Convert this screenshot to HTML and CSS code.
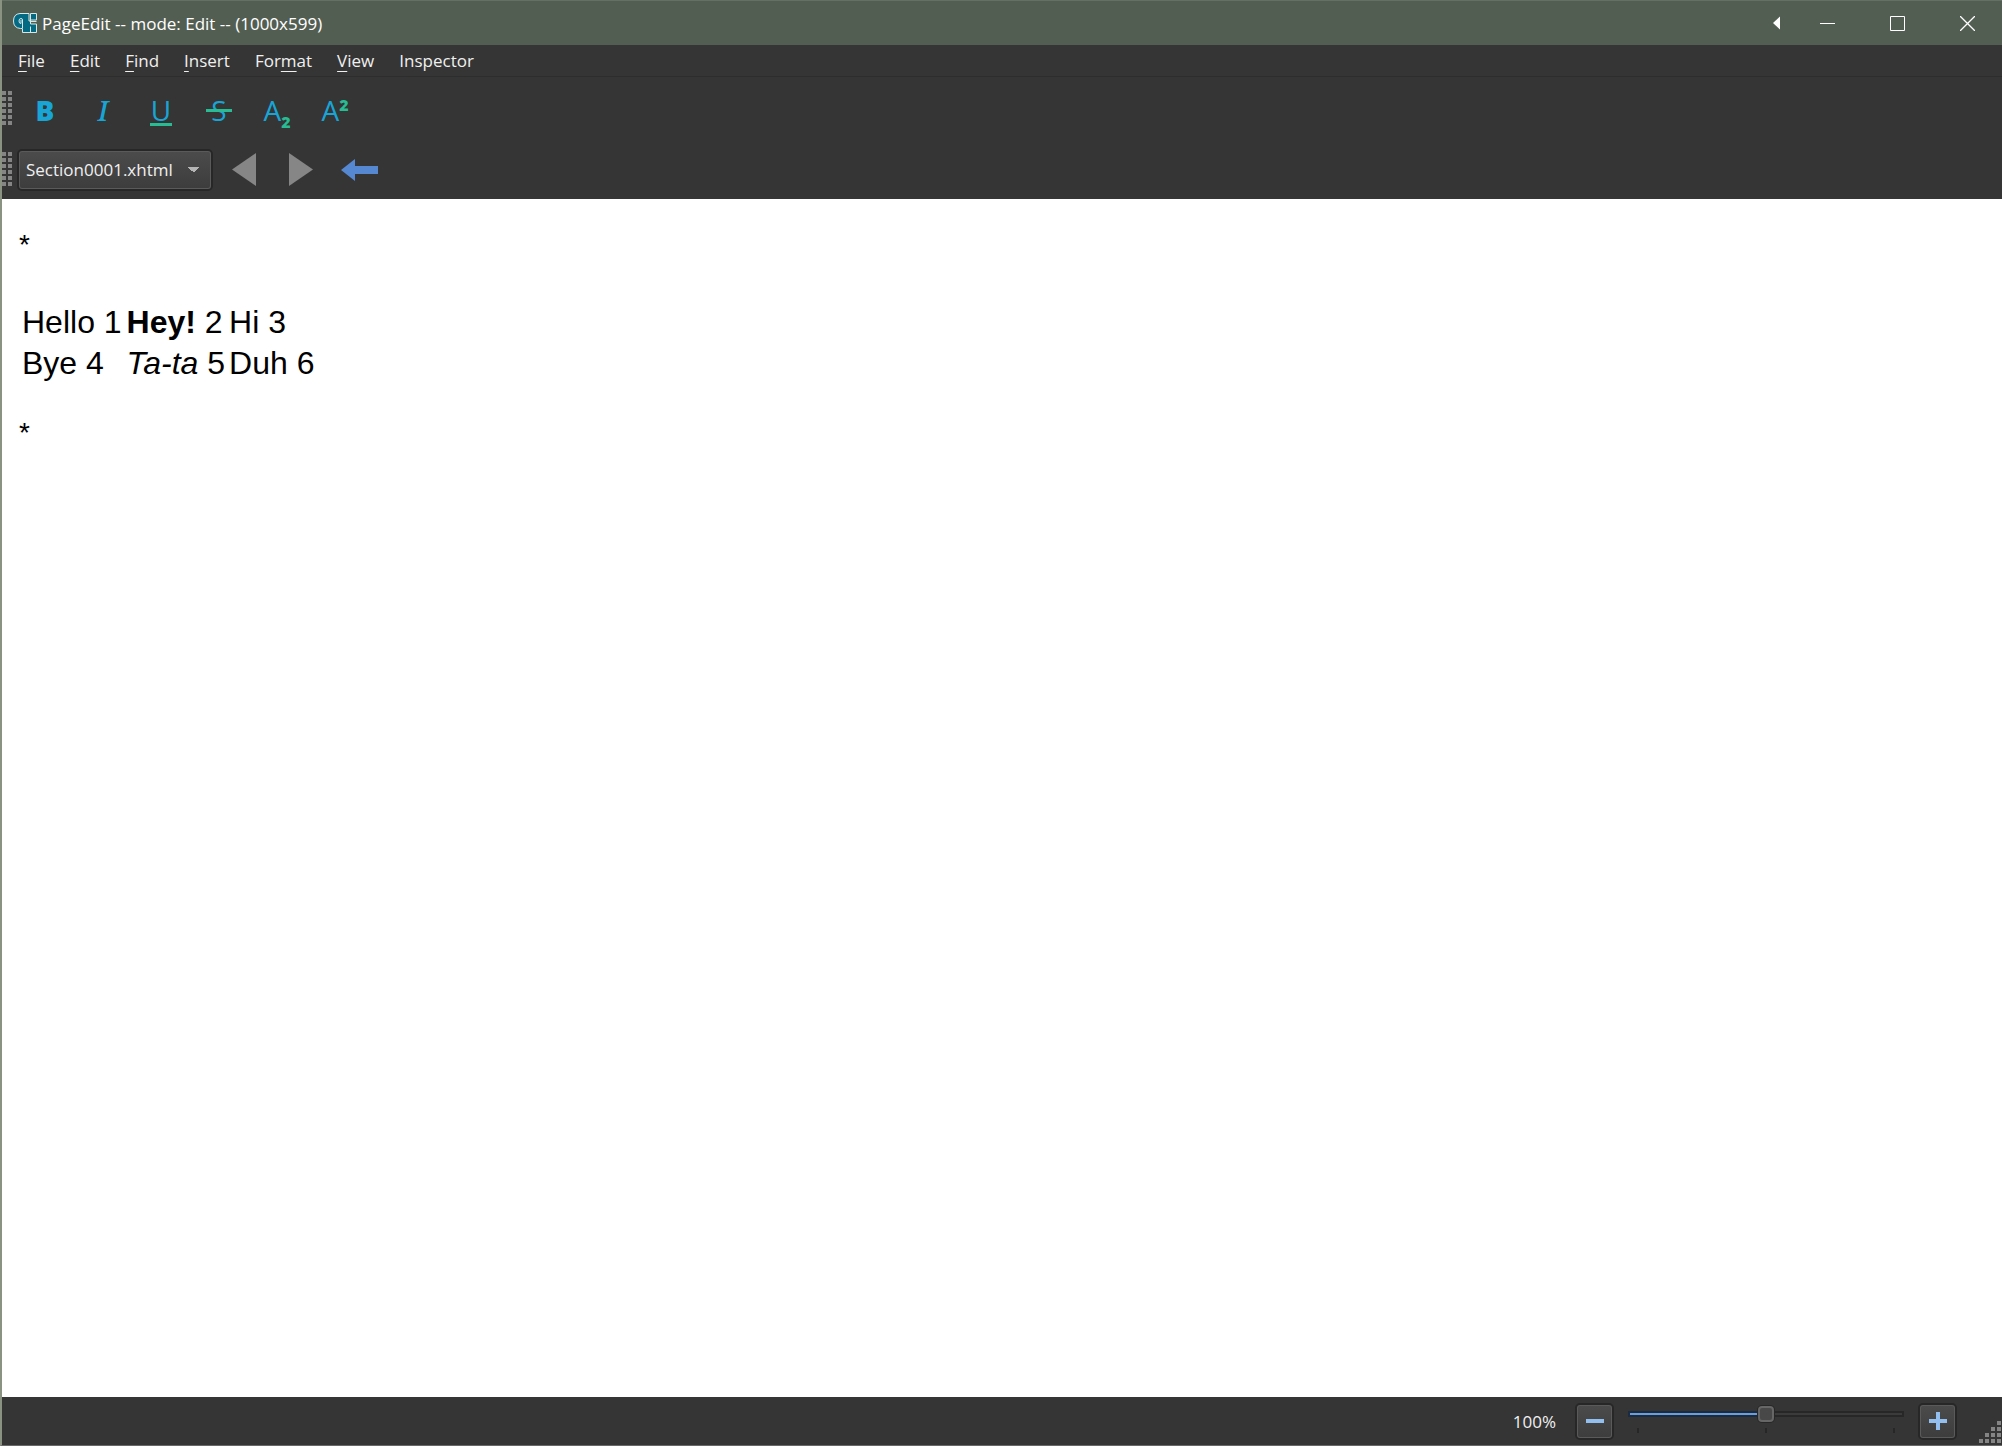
FILE: index.html
```html
<!DOCTYPE html>
<html lang="en">
<head>
<meta charset="utf-8">
<title>PageEdit</title>
<link rel="stylesheet" href="styles.css">
</head>
<body>
<div class="window">
  <header class="titlebar">
    <svg class="logo" width="24" height="20" viewBox="0 0 24 20"><path d="M7 .5h9v7.500h1.500V.5h6v6.500h-6v4h6v8.500h-14v-4h-2q-7-.500-7-7.500t6.500-7.500z" fill="#046a84" stroke="#d5e8e8"/><path d="M9.500 15V7q0-1.500-1.500-1.500q-2 0-2 2.500t2 2.500V7M17.500 19v-5.500M18 8.500h5.500" fill="none" stroke="#d5e8e8"/></svg>
    <h1 class="title">PageEdit -- mode: Edit -- (1000x599)</h1>
    <button class="caption arrow" aria-label="Pin"><svg width="8" height="14"><path d="M7 .5v13L0 7z" fill="#fff"/></svg></button>
    <button class="caption" aria-label="Minimize"><svg width="15" height="15"><path d="M0 7.500h15" stroke="#fff"/></svg></button>
    <button class="caption" aria-label="Maximize"><svg width="15" height="15"><path d="M.5.5h14v14H.5z" fill="none" stroke="#fff"/></svg></button>
    <button class="caption" aria-label="Close"><svg width="15" height="15"><path d="M0 0l15 15M15 0L0 15" stroke="#fff" stroke-width="1.300"/></svg></button>
  </header>
  <nav class="menubar">
    <button><u>F</u>ile</button><button><u>E</u>dit</button><button><u>F</u>ind</button><button><u>I</u>nsert</button><button>For<u>m</u>at</button><button><u>V</u>iew</button><button>Inspector</button>
  </nav>
  <div class="toolbar format">
    <span class="grip"></span>
    <button class="tool bold">B</button>
    <button class="tool italic">I</button>
    <button class="tool under">U</button>
    <button class="tool strike">S</button>
    <button class="tool">A<sub>2</sub></button>
    <button class="tool">A<sup>2</sup></button>
  </div>
  <div class="toolbar navigate">
    <span class="grip"></span>
    <select class="files" aria-label="File"><option>Section0001.xhtml</option></select>
    <button class="step" aria-label="Previous"><svg width="24" height="33"><path d="M24 0v33L0 16.500z" fill="#868686"/></svg></button>
    <button class="step" aria-label="Next"><svg width="24" height="33"><path d="M0 0v33L24 16.500z" fill="#868686"/></svg></button>
    <button class="step" aria-label="Back"><svg width="37" height="22"><path d="M0 11L14 0v7h23v8H14v7z" fill="#5588d0"/></svg></button>
  </div>
  <main class="page">
    <p>*</p>
    <table>
      <tr><td>Hello 1</td><td><b>Hey!</b> 2</td><td>Hi 3</td></tr>
      <tr><td>Bye 4</td><td><i>Ta-ta</i> 5</td><td>Duh 6</td></tr>
    </table>
    <p>*</p>
  </main>
  <footer class="statusbar">
    <label for="zoom">100%</label>
    <button class="zoom" aria-label="Zoom out"><svg width="18" height="18"><path d="M0 7h18v4H0z" fill="#93bff0"/></svg></button>
    <div class="slider">
      <input id="zoom" type="range" min="0" max="100" value="50">
      <div class="ticks"><i></i><i></i><i></i></div>
    </div>
    <button class="zoom" aria-label="Zoom in"><svg width="18" height="18"><path d="M0 7h7V0h4v7h7v4h-7v7H7v-7H0z" fill="#93bff0"/></svg></button>
    <svg class="resize" width="22" height="22" fill="#858585"><path d="M18 0h4v4h-4zM12 6h4v4h-4zM18 6h4v4h-4zM6 12h4v4H6zM12 12h4v4h-4zM18 12h4v4h-4zM0 18h4v4H0zM6 18h4v4H6zM12 18h4v4h-4zM18 18h4v4h-4z"/></svg>
  </footer>
</div>
</body>
</html>
```
FILE: styles.css
```css
* { box-sizing: border-box; }
body {
  margin: 0;
  font-family: "Open Sans", sans-serif;
  font-size: 17px;
  color: #f0f0f0;
  background: #353535;
}
button {
  margin: 0;
  padding: 0;
  border: 0;
  background: none;
  font: inherit;
  color: inherit;
}
svg { display: block; }
.window {
  display: flex;
  flex-direction: column;
  min-height: 100vh;
  border-left: 2px solid #8a9382;
  border-bottom: 1px solid #686868;
}
.titlebar {
  display: flex;
  align-items: center;
  height: 45px;
  padding-left: 11px;
  background: #535e53;
  border-top: 1px solid #657064;
}
.title {
  flex: 1;
  margin: 0 0 0 5px;
  font-size: 17px;
  font-weight: 400;
  color: #fff;
}
.caption {
  display: grid;
  place-items: center;
  width: 70px;
  height: 44px;
}
.arrow { width: 30px; }
.menubar {
  display: flex;
  gap: 25px;
  height: 32px;
  padding: 0 16px;
  border-bottom: 1px solid #2d2d2d;
}
.menubar u { text-underline-offset: 4px; text-decoration-thickness: 1px; }
.toolbar { display: flex; align-items: center; }
.format { height: 63px; }
.navigate { height: 59px; }
.grip {
  width: 12px;
  height: 36px;
  background: conic-gradient(from 270deg at 4px 4px, #858585 90deg, transparent 0) 0 0 / 6px 6px;
}
.format .grip { margin-right: 2px; }
.tool {
  position: relative;
  width: 58px;
  height: 48px;
  font-size: 28px;
  font-weight: 500;
  line-height: 50px;
  color: #18a5d6;
}
.bold { font-weight: 800; }
.italic { font-family: "Noto Serif", "DejaVu Serif", serif; font-style: italic; }
.tool sub, .tool sup {
  font-size: 16px;
  font-weight: 800;
  line-height: 0;
  color: #27bc94;
}
.under::after, .strike::after {
  content: "";
  position: absolute;
  left: 18px;
  right: 18px;
  bottom: 7px;
  height: 3px;
  background: #27bc94;
}
.strike::after { left: 16px; right: 16px; bottom: 21px; }
.files {
  appearance: none;
  width: 194px;
  height: 40px;
  margin: 0 20px 0 4px;
  padding: 0 6px;
  border: 2px solid #5a5a5a;
  border-radius: 4px;
  outline: 2px solid #272727;
  outline-offset: -1px;
  font: inherit;
  color: #f0f0f0;
  background:
    conic-gradient(from 315deg at 50% 100%, #b5b5b5 90deg, transparent 0) right 10px center / 12px 6px no-repeat,
    linear-gradient(#4b4b4b, #3d3d3d);
}
.step { margin-right: 33px; }
.step + .step + .step { margin-left: -5px; }
.page {
  flex: 1;
  padding: 0 16px;
  font-family: "Liberation Sans", Arial, sans-serif;
  font-size: 32px;
  line-height: 37px;
  color: #000;
  background: #fff;
}
.page p {
  margin: 30px 0;
  padding-left: 1px;
  font-size: 28px;
  line-height: 32px;
}
.page table { margin: 40px 0 32px; border-spacing: 3px 2px; }
.page td { padding: 1px; }
.page td:last-child { padding-left: 0; }
.statusbar {
  display: flex;
  align-items: center;
  justify-content: flex-end;
  height: 48px;
}
.zoom {
  display: grid;
  place-items: center;
  width: 37px;
  height: 35px;
  border: 2px solid #5a5a5a;
  border-radius: 4px;
  outline: 2px solid #272727;
  outline-offset: -1px;
  background: linear-gradient(#4b4b4b, #3d3d3d);
}
.statusbar label { margin-right: 20px; }
.slider { width: 276px; height: 35px; margin: 0 15px; }
.slider input {
  appearance: none;
  display: block;
  width: 100%;
  height: 20px;
  margin: 0;
  background: linear-gradient(90deg, #6a9fdc 50%, #3b3b3b 0) center / calc(100% - 4px) 2px no-repeat,
    linear-gradient(90deg, #1b2c42 50%, #272727 0) center / 100% 6px no-repeat;
}
.slider input::-webkit-slider-thumb {
  appearance: none;
  width: 16px;
  height: 16px;
  border: 2px solid #666;
  border-radius: 4px;
  background: #484848;
  box-shadow: 0 0 0 1px #272727;
}
.ticks { display: flex; justify-content: space-between; padding: 4px 9px; }
.ticks i { width: 2px; height: 5px; background: #272727; }
.resize { align-self: flex-end; margin: 0 1px 2px 23px; }
```
